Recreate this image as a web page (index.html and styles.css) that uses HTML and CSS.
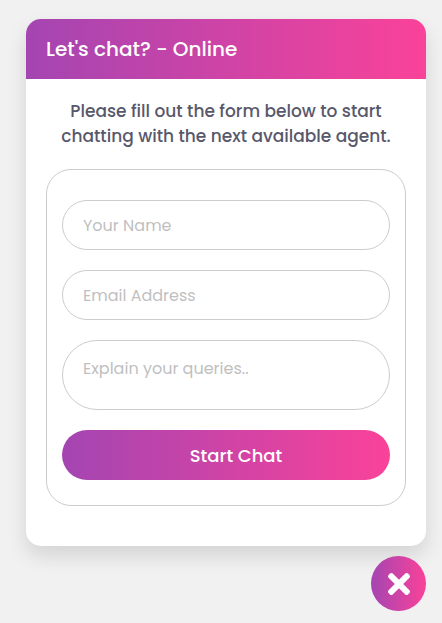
FILE: index.html
```html
<!DOCTYPE html>
<html lang="en">
<head>
<meta charset="utf-8">
<title>Chat</title>
<link rel="stylesheet" href="styles.css">
</head>
<body>
<main class="wrapper">
  <header class="head">Let's chat? - Online</header>
  <div class="content">
    <p class="desc">Please fill out the form below to start<br>chatting with the next available agent.</p>
    <form class="form">
      <input class="field" type="text" placeholder="Your Name" aria-label="Your Name">
      <input class="field" type="email" placeholder="Email Address" aria-label="Email Address">
      <textarea class="field message" placeholder="Explain your queries.." aria-label="Explain your queries"></textarea>
      <button class="submit" type="button">Start Chat</button>
    </form>
  </div>
</main>
<button class="toggle" type="button" aria-label="Close">
  <svg width="22" height="22" viewBox="0 0 352 352"><path fill="#fff" d="M242.72 176l100.07-100.07c12.28-12.28 12.28-32.19 0-44.48l-22.24-22.24c-12.28-12.28-32.19-12.28-44.48 0L176 109.28 75.93 9.21c-12.28-12.28-32.19-12.28-44.48 0L9.21 31.45c-12.28 12.28-12.28 32.19 0 44.48L109.28 176 9.21 276.07c-12.28 12.28-12.28 32.19 0 44.48l22.24 22.24c12.28 12.28 32.2 12.28 44.48 0L176 242.72l100.07 100.07c12.28 12.28 32.2 12.28 44.48 0l22.24-22.24c12.28-12.28 12.28-32.19 0-44.48L242.72 176z"/></svg>
</button>
</body>
</html>
```
FILE: styles.css
```css
* {
  box-sizing: border-box;
  margin: 0;
  padding: 0;
  font-family: Poppins, Inter, sans-serif;
}
body {
  height: 623px;
  padding: 19px 16px 0 26px;
  background: #f1f1f1;
  overflow: hidden;
}
.wrapper {
  height: 527px;
  background: #fff;
  border-radius: 15px;
  box-shadow: 0 10px 20px rgba(0, 0, 0, 0.12);
}
.head {
  height: 60px;
  padding: 0 20px;
  line-height: 60px;
  border-radius: 15px 15px 0 0;
  background: linear-gradient(to right, #a445b2, #fa4299);
  color: #fff;
  font-size: 20px;
  font-weight: 500;
}
.content {
  padding: 20px;
}
.desc {
  height: 50px;
  line-height: 25px;
  font-size: 17px;
  font-weight: 500;
  color: #58586b;
  text-align: center;
  white-space: nowrap;
}
.form {
  display: flex;
  flex-direction: column;
  gap: 20px;
  height: 337px;
  margin-top: 20px;
  padding: 30px 15px 25px;
  border: 1px solid #ccc;
  border-radius: 25px;
}
.field {
  display: block;
  width: 100%;
  height: 50px;
  padding: 0 20px;
  border: 1px solid #ccc;
  border-radius: 50px;
  background: #fff;
  outline: none;
  font-size: 16px;
}
.field::placeholder {
  color: #bfbfbf;
  opacity: 1;
}
.message {
  height: 70px;
  padding-top: 16px;
  line-height: 24px;
  resize: none;
  overflow: hidden;
}
.submit {
  height: 50px;
  padding: 0 0 0 20px;
  border: 0;
  border-radius: 50px;
  background: linear-gradient(to right, #a445b2, #fa4299);
  color: #fff;
  font-size: 18px;
  font-weight: 500;
}
.toggle {
  display: flex;
  align-items: center;
  justify-content: center;
  width: 55px;
  height: 55px;
  margin: 10px 0 0 auto;
  padding: 1px 0 0 1px;
  border: 0;
  border-radius: 50%;
  background: linear-gradient(to right, #a445b2, #fa4299);
}
```
